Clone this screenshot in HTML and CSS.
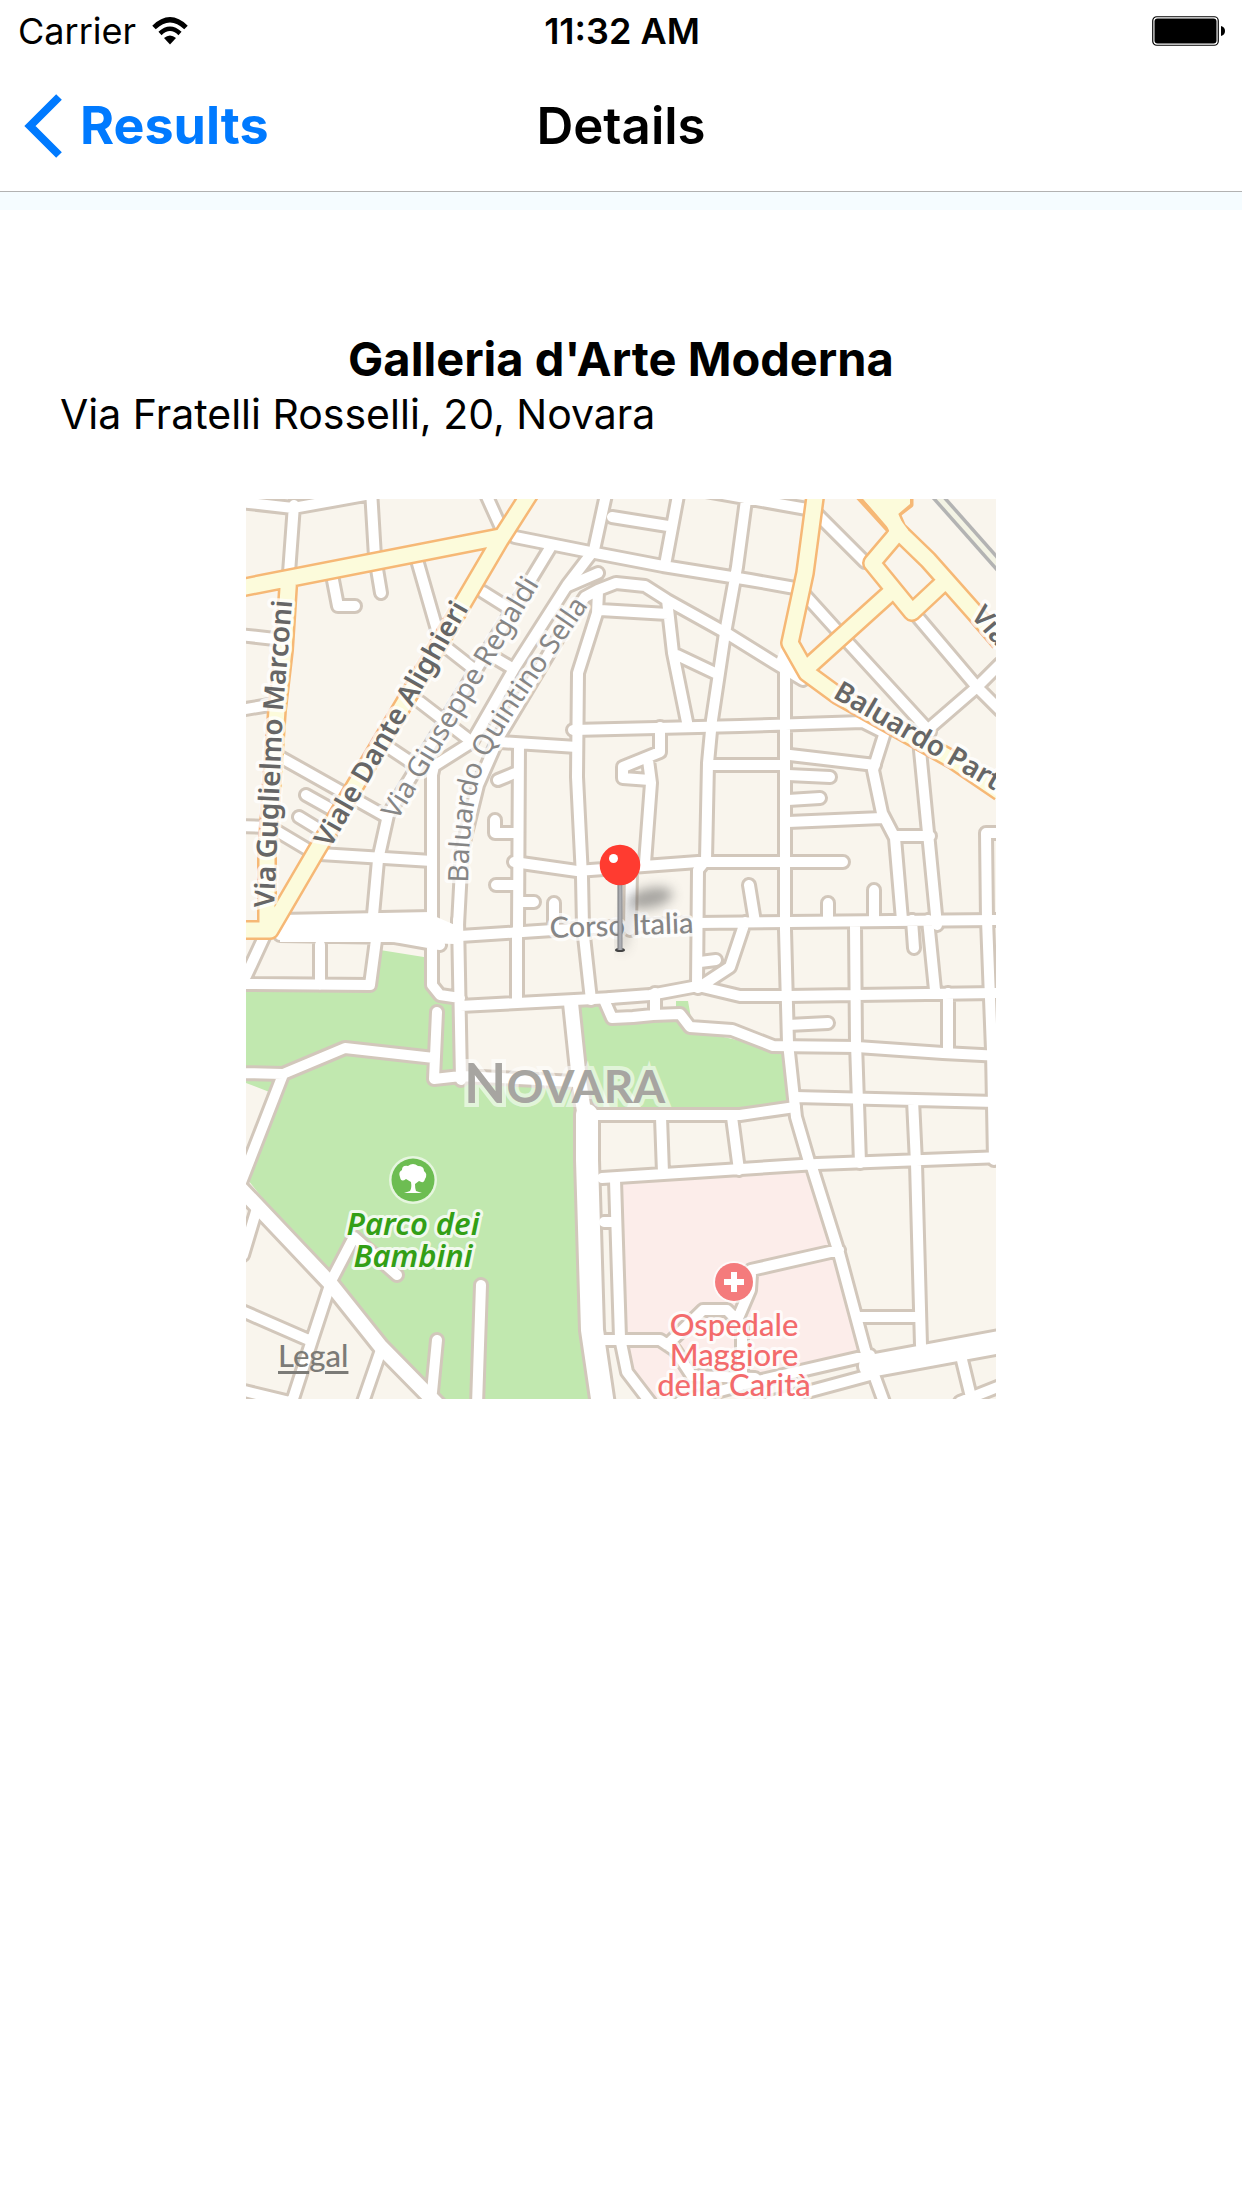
FILE: index.html
```html
<!DOCTYPE html>
<html lang="en">
<head>
<meta charset="utf-8">
<meta name="viewport" content="width=device-width, initial-scale=1">
<title>Details</title>
<link rel="stylesheet" href="styles.css">
</head>
<body>
<header class="header">
  <div class="status">
    <div class="status-left">
      <span>Carrier</span>
      <svg class="wifi" viewBox="0 0 36 28" aria-hidden="true">
        <path d="M2 10.500Q18-5 34 10.500" fill="none" stroke="#000" stroke-width="5"/>
        <path d="M8 16.500Q18 7 28 16.500" fill="none" stroke="#000" stroke-width="4.500"/>
        <path d="M12 21Q18 16 24 21L18 27.500Z"/>
      </svg>
    </div>
    <span class="clock">11:32 AM</span>
    <svg class="battery" viewBox="0 0 74 30" aria-hidden="true">
      <rect x=".75" y=".75" width="65.500" height="28.500" rx="4" fill="none" stroke="#000" stroke-width="1.200"/>
      <rect x="2.500" y="2.500" width="62" height="25" rx="3"/>
      <path d="M69 10q4 1 4 5t-4 5z"/>
    </svg>
  </div>
  <nav class="nav">
    <button class="back" type="button">
      <svg class="chevron" viewBox="0 0 38 64" aria-hidden="true"><path d="M35 3L6 32l29 29" fill="none" stroke="#007aff" stroke-width="8"/></svg>
      <span>Results</span>
    </button>
    <h1 class="nav-title">Details</h1>
  </nav>
</header>
<main class="main">
  <h2 class="name">Galleria d'Arte Moderna</h2>
  <p class="address">Via Fratelli Rosselli, 20, Novara</p>
  <div class="map">
    <svg class="map-canvas" viewBox="246 499 750 900" role="img" aria-label="Map of Novara">
      <defs>
        <filter id="soft" x="-50%" y="-80%" width="200%" height="260%"><feGaussianBlur stdDeviation="6"/></filter>
        <linearGradient id="stem"><stop offset="0" stop-color="#77787c"/><stop offset=".5" stop-color="#b4b6bb"/><stop offset="1" stop-color="#8a8b90"/></linearGradient>
        <path id="quintino" d="M468 883Q469 815 480 777C490 745 520 705 592 600"/>
        <path id="marconi" d="M274 908L283 710L294 580"/>
        <g id="streets">
          <!-- north-west -->
          <path d="M240 502L293 508L371 494M294 505L289 573M371 490L375 557L381 593M332 575L338 606H355M417 560L440 640M447 648L475 670M420 702L472 742M240 635L275 639M240 710L275 704M484 490L503 532M483 592L510 609M490 655L512 668"/>
          <path d="M515 537L590 552L663 566L750 580L795 588M607 490L594 550L568 584L515 667L472 742L434 766L432 775V917M612 517L668 526M679 490L665 565M700 490L807 509M746 500L737 567L725 633L712 720L708 763L706 860L698 870L697 985"/>
          <path d="M550 548L388 815L378 860L373 915M598 573L568 586M803 680L773 662L728 634L667 600L645 586L616 583L598 590L585 597L563 630L500 735L478 785L462 850L458 925M598 592L597 613L578 673L577 777L582 877L583 927L591 1000M600 610L668 614M667 600L673 653L687 722M677 655L715 673"/>
          <path d="M280 757L385 816M306 795L340 814M299 817L330 836M385 745L415 765M240 826L270 827L312 852M320 854L432 861"/>
          <!-- north-east -->
          <path d="M818 515L865 562M805 595L843 637L930 732M916 615L977 687L1000 710M1000 664L977 687L925 732M785 660V930L788 1043L796 1117L810 1165M500 742L577 747M573 730L740 726L863 722L883 732M519 745L518 930"/>
          <!-- centre -->
          <path d="M498 780L515 773M495 820V833H517M514 862L577 871L698 862H843M496 885H517M519 902H534M554 903V930M660 727V752L623 767V778L650 780M648 760L651 783L645 863M631 868L630 930M710 765H785M749 885L755 922M790 755L875 765M885 732L873 770L882 813L895 838L902 920M788 775L830 777M788 800L820 798M788 822L882 818M895 836H930M919 740L929 843L937 925M1000 833H986L987 920L992 1050L994 1160M828 903V920M874 890V920"/>
          <path d="M460 936L553 930L697 923L1000 920M745 922L730 967L698 988M700 962L716 960M610 998L650 995L698 986L740 996H787L1000 993M855 925L856 1043L860 1163M912 920L914 948M928 920L935 990M948 993V1050M788 1025L828 1023"/>
          <path d="M605 1002L612 1018L633 1017L653 1015L680 1014L690 1027L732 1030L773 1046L857 1047L943 1053L1000 1056M655 993V1014M585 1115H740L795 1107M795 1097L1000 1102M661 1117L663 1173M732 1117L739 1170M913 1100L916 1163L921 1345M602 1178L817 1164L1000 1157"/>
          <!-- west -->
          <path d="M265 935L246 976M320 945V985M240 984L370 985L376 940M280 920L432 917M280 935L395 937L440 945M432 940V985L440 995L460 998M437 1012L434 1079L461 1076L575 1082M458 920L461 1080M460 1006L612 998M517 930V1002M240 1073L283 1074L345 1048L434 1058M282 1077L240 1185"/>
          <!-- south -->
          <path d="M330 1283L354 1237L397 1275M330 1285L313 1337L291 1405M240 1310L311 1341M381 1350L362 1405M258 1205L243 1255M240 1390L290 1402M437 1340L432 1392M481 1285L477 1405M615 1180L620 1338L627 1372L650 1402M604 1340H660L675 1350L692 1376L755 1378M812 1167L839 1253L865 1350L885 1405M751 1270L839 1250M860 1317H918M667 1345L703 1310H727L742 1325V1378M751 1275L750 1290L738 1318M962 1360L971 1397M604 1222H613M870 1375L770 1402M870 1355L749 1383L680 1402M960 1402L1000 1386"/>
        </g>
        <g id="wide-streets">
          <path d="M240 1188L330 1283L381 1347L438 1405"/>
        </g>
        <path id="boulevard" d="M587 1115V1160L592 1330L603 1405M1000 1342L870 1366"/>
        <path id="south-road" d="M571 1003L579 1080L587 1130"/>
        <g id="main-streets">
          <path d="M240 588L500 537M532 490L500 540L402 707L315 853L270 930H240M289 573L284 650L277 710L267 853V923"/>
          <path d="M816 490L805 573L790 643L807 673L837 695L953 760L1000 792M880 490L897 530L928 560L975 613L1000 642M900 530L872 563L912 612L943 583M890 593L808 667"/>
        </g>
      </defs>
      <rect class="land" x="246" y="499" width="750" height="900"/>
      <path class="park" d="M246 987H370L380 950L430 958V990L458 1000V1080H575V1160L582 1330L592 1399H434L381 1347L330 1283L248 1180L272 1093L246 1083Z"/>
      <path class="park" d="M573 1005H605L612 1022L680 1016L692 1030L773 1048H783L791 1103L740 1112H587ZM676 1001H688L691 1018L676 1010Z"/>
      <path class="hospital" d="M618 1180L812 1168L865 1352L700 1390L650 1399L630 1370L620 1340Z"/>
      <g class="rail"><path class="rail-edge" d="M932 490L1002 569"/><path class="rail-bed" d="M932 490L1002 569"/></g>
      <use href="#boulevard" class="road edge boulevard-edge"/>
      <use href="#south-road" class="road edge wide-edge"/>
      <use href="#wide-streets" class="road edge wide-edge"/>
      <use href="#streets" class="road edge"/>
      <use href="#boulevard" class="road boulevard-fill"/>
      <use href="#south-road" class="road wide-fill"/>
      <use href="#wide-streets" class="road wide-fill"/>
      <use href="#streets" class="road"/>
      <path class="plain" d="M280 915H432L455 925V944L390 942H280ZM782 645L806 684L775 664Z"/>
      <use href="#main-streets" class="main-edge"/>
      <path class="plaza-edge" d="M858 497L890 532M880 512L898 515L911 505V495"/>
      <path class="plaza" d="M860 495H910V504L897 515L908 530L888 533L890 530Z"/>
      <use href="#main-streets" class="main-fill"/>

      <g class="label strong">
        <text><textPath href="#marconi">Via Guglielmo Marconi</textPath></text>
        <text transform="translate(330 849) rotate(-60)">Viale Dante Alighieri</text>
        <text transform="translate(832 697) rotate(30)">Baluardo Partigiani</text>
        <text transform="translate(970 616) rotate(49)">Via</text>
      </g>
      <g class="label street">
        <text transform="translate(397 821) rotate(-59)">Via Giuseppe Regaldi</text>
        <text><textPath href="#quintino">Baluardo Quintino Sella</textPath></text>
        <text class="corso" transform="translate(550 938) rotate(-2)">Corso Italia</text>
      </g>
      <text class="city" x="464" y="1103">N<tspan class="city-small">OVARA</tspan></text>

      <circle cx="413" cy="1180" r="24" fill="#fff" opacity=".6"/>
      <circle cx="413" cy="1180" r="21.500" fill="#6dbd52"/>
      <path fill="#fff" d="M411 1182L406 1179Q401 1183 400 1177Q398 1172 402 1170Q402 1165 408 1166Q413 1162 418 1166Q424 1166 424 1171Q428 1174 425 1179Q424 1184 419 1181L415 1184Q415 1189 416 1191L422 1193H404L410 1191Q412 1188 411 1182Z"/>
      <text class="poi green" x="413" y="1235">Parco dei</text>
      <text class="poi green" x="413" y="1267">Bambini</text>

      <circle cx="734" cy="1282" r="21" fill="#fff" opacity=".7"/>
      <circle cx="734" cy="1282" r="19" fill="#f47b7c"/>
      <path d="M734 1272V1292M724 1282H744" stroke="#fff" stroke-width="6"/>
      <text class="poi red" x="734" y="1336">Ospedale</text>
      <text class="poi red" x="734" y="1366">Maggiore</text>
      <text class="poi red" x="734" y="1396">della Carità</text>

      <ellipse cx="650" cy="898" rx="23" ry="10" transform="rotate(-12 650 898)" fill="#555" opacity=".5" filter="url(#soft)"/>
      <path d="M620 950L632 905" stroke="#555" stroke-width="12" opacity=".2" filter="url(#soft)"/>
      <ellipse cx="620" cy="950" rx="5" ry="2" fill="#444"/>
      <rect x="617.500" y="880" width="5" height="70" fill="url(#stem)"/>
      <circle cx="620" cy="865" r="20.300" fill="#ff3b30"/>
      <circle cx="613.500" cy="858.500" r="4.500" fill="#fff"/>
    </svg>
    <a class="legal" href="#legal">Legal</a>
  </div>
</main>
</body>
</html>
```

FILE: styles.css
```css
* { box-sizing: border-box; }

body {
  margin: 0;
  background: #fff;
  color: #000;
  font-family: Inter, "Liberation Sans", sans-serif;
}

.header {
  border-bottom: 1px solid #b2b2b2;
}

.status {
  display: grid;
  grid-template-columns: 1fr auto 1fr;
  align-items: center;
  height: 60px;
  padding: 2px 16px 0 18px;
  font-size: 36px;
  line-height: 40px;
}

.status-left {
  display: flex;
  align-items: center;
  gap: 16px;
}

.wifi { width: 36px; height: 28px; }

.clock { font-weight: 600; }

.battery {
  justify-self: end;
  width: 74px;
  height: 30px;
}

.nav {
  display: grid;
  grid-template-columns: 1fr auto 1fr;
  align-items: center;
  height: 131px;
  padding: 0 24px;
}

.back {
  justify-self: start;
  display: flex;
  align-items: center;
  gap: 18px;
  padding: 0;
  border: 0;
  background: none;
  color: #007aff;
  font: 700 52px/64px Inter, "Liberation Sans", sans-serif;
}

.chevron { width: 38px; height: 64px; }

.nav-title {
  margin: 0;
  font-size: 51px;
  font-weight: 600;
  line-height: 64px;
}

.main {
  border-top: 18px solid #f5fcff;
  padding: 120px 60px 0;
}

.name {
  margin: 0;
  font-size: 47px;
  font-weight: 700;
  line-height: 58px;
  text-align: center;
}

.address {
  margin: 0;
  font-size: 41px;
  line-height: 52px;
}

.map {
  position: relative;
  max-width: 750px;
  margin: 59px auto 0;
}

.map-canvas {
  display: block;
  width: 100%;
  height: auto;
}

.land { fill: #f9f5ed; }
.park { fill: #c1e8af; }
.hospital { fill: #fcedea; }

.rail path { fill: none; }
.rail .rail-edge { stroke: #b3b3b3; stroke-width: 12; }
.rail .rail-bed { stroke: #f3f3e4; stroke-width: 5; }

.road {
  fill: none;
  stroke: #fff;
  stroke-width: 10;
  stroke-linecap: round;
  stroke-linejoin: round;
}

.edge { stroke: #d2c7bb; stroke-width: 16; }
.wide-fill { stroke-width: 14; }
.wide-edge { stroke-width: 20; }
.boulevard-fill { stroke-width: 22; }
.boulevard-edge { stroke-width: 28; }
.plain { fill: #fff; }

.main-edge,
.main-fill,
.plaza-edge {
  fill: none;
  stroke: #f6b876;
  stroke-width: 20;
  stroke-linejoin: round;
}

.main-fill { stroke: #fcfbdb; stroke-width: 15; }
.plaza-edge { stroke-width: 5; }
.plaza { fill: #fcfbdb; }

.label {
  font-family: "Noto Sans", sans-serif;
  font-size: 28px;
  paint-order: stroke;
  stroke: rgba(255, 255, 255, 0.75);
  stroke-width: 7px;
  stroke-linejoin: round;
}

.strong { fill: #666; font-weight: 600; }
.street { fill: #868686; }
.corso { font-family: Lato, sans-serif; font-size: 29px; font-weight: 500; }

.city {
  font: 700 55px Lato, sans-serif;
  fill: #a7a5a1;
  paint-order: stroke;
  stroke: rgba(255, 255, 255, 0.55);
  stroke-width: 8px;
}

.city-small { font-size: 46px; }

.poi {
  font-family: Lato, sans-serif;
  font-size: 31px;
  text-anchor: middle;
  paint-order: stroke;
  stroke: rgba(255, 255, 255, 0.8);
  stroke-width: 6px;
  stroke-linejoin: round;
}

.green {
  font-family: "Noto Sans", sans-serif;
  fill: #339f16;
  font-style: italic;
  font-weight: 600;
}

.red { fill: #f36b6c; font-weight: 500; }

.legal {
  position: absolute;
  left: 32px;
  bottom: 26px;
  color: #7c7b77;
  font: 500 31px/36px Lato, sans-serif;
  text-underline-offset: 4px;
}
```
